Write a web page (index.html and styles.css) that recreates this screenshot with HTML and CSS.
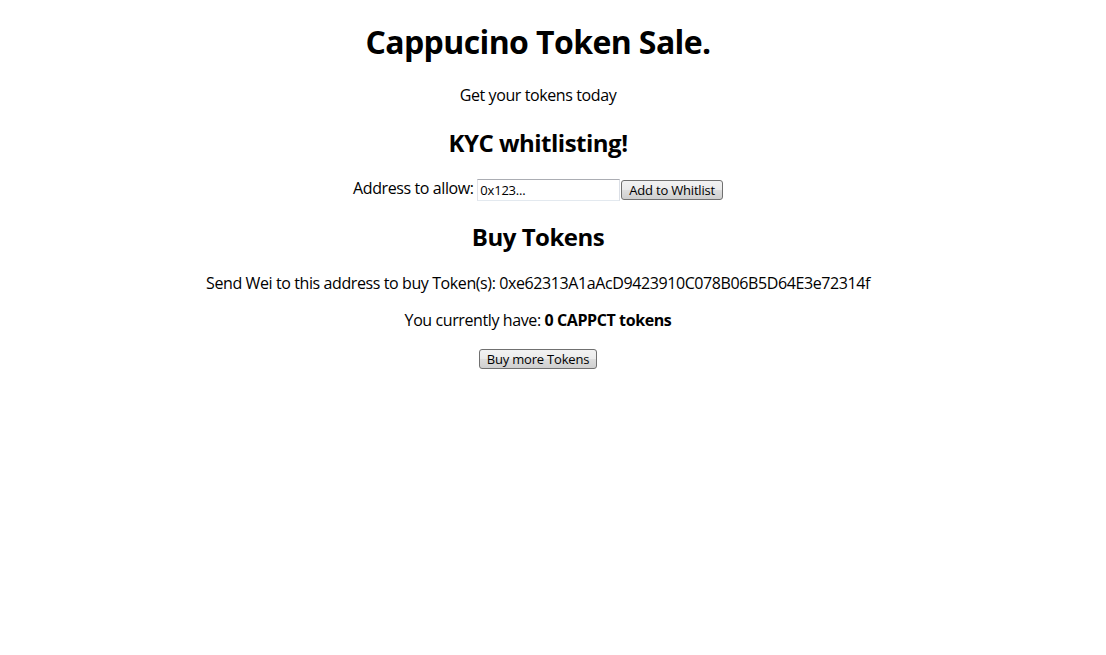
FILE: index.html
```html
<!DOCTYPE html>
<html>
<head>
<meta charset="utf-8">
<title>Cappucino Token Sale</title>
<link rel="stylesheet" href="styles.css">
</head>
<body>
<div class="app">
  <h1 class="title">Cappucino Token Sale.</h1>
  <p class="text">Get your tokens today</p>
  <h2 class="subtitle">KYC whitlisting!</h2>
  <div class="row">Address to allow: <input class="field" type="text" value="0x123..."><button class="btn" type="button">Add to Whitlist</button></div>
  <h2 class="subtitle">Buy Tokens</h2>
  <p class="text">Send Wei to this address to buy Token(s): 0xe62313A1aAcD9423910C078B06B5D64E3e72314f</p>
  <p class="text">You currently have: <strong>0 CAPPCT tokens</strong></p>
  <button class="btn" type="button">Buy more Tokens</button>
</div>
</body>
</html>
```
FILE: styles.css
```css
html, body {
  background: #fff;
}
body {
  margin: 0;
  color: #000;
  font-family: "Open Sans", "Noto Sans", "Liberation Sans", sans-serif;
}
.app {
  text-align: center;
  line-height: 1.33;
  padding: 0 30px 0 0;
}
.title {
  font-size: 32px;
  font-weight: 700;
  margin: 21.44px 0;
  letter-spacing: -0.6px;
}
.subtitle {
  font-size: 24px;
  font-weight: 700;
  margin: 19.92px 0;
  letter-spacing: -0.5px;
}
.text {
  font-size: 16px;
  margin: 16px 0;
  letter-spacing: -0.4px;
}
.row {
  font-size: 16px;
  letter-spacing: -0.4px;
}
.field {
  font-family: inherit;
  font-size: 13px;
  letter-spacing: -0.2px;
  width: 143px;
  height: 22px;
  box-sizing: border-box;
  padding: 1px 2px;
  margin: 0 1px 0 0;
  border: 1px solid #d6d6d6;
  border-top-color: #abadb3;
  border-left-color: #e2e3ea;
  border-right-color: #dbdfe6;
  border-bottom-color: #e3e9ef;
  vertical-align: middle;
  background: #fff;
  outline: none;
}
.btn {
  font-family: inherit;
  font-size: 13px;
  letter-spacing: -0.2px;
  height: 20px;
  box-sizing: border-box;
  padding: 0 7px;
  margin: 0;
  border: 1px solid #707070;
  border-radius: 3px;
  background: linear-gradient(#f2f2f2 0%, #ebebeb 50%, #dddddd 50%, #cfcfcf 100%);
  color: #000;
  vertical-align: middle;
  line-height: 17px;
}
```
